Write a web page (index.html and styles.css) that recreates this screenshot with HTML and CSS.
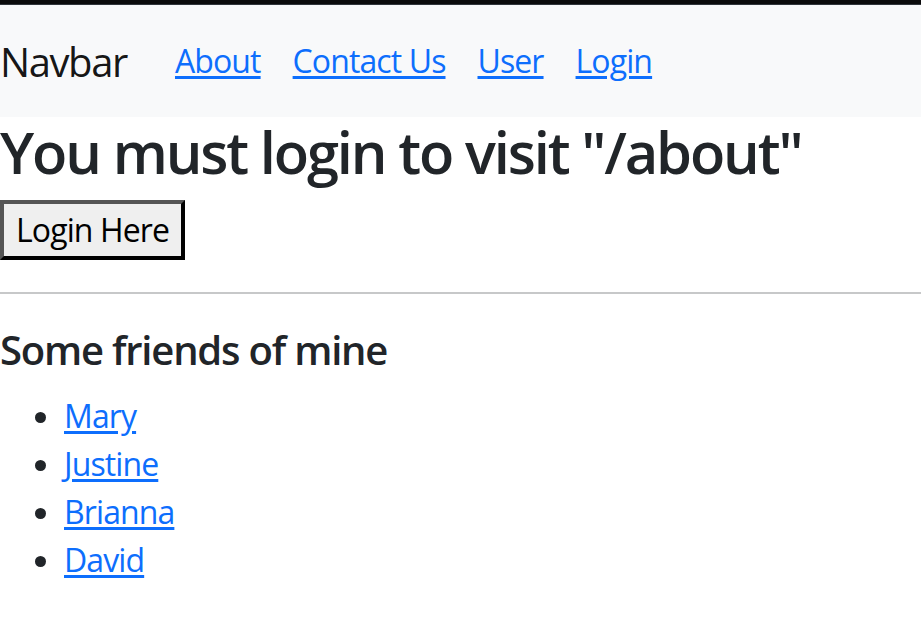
FILE: index.html
```html
<!DOCTYPE html>
<html lang="en">
<head>
<meta charset="utf-8">
<title>Navbar</title>
<link rel="stylesheet" href="styles.css">
</head>
<body>
<div class="topstrip"></div>
<nav class="navbar">
  <a class="brand" href="#">Navbar</a>
  <div class="navlinks">
    <a class="navlink" href="#">About</a>
    <a class="navlink" href="#">Contact Us</a>
    <a class="navlink" href="#">User</a>
    <a class="navlink" href="#">Login</a>
  </div>
</nav>
<main class="content">
  <h1 class="title">You must login to visit "/about"</h1>
  <button class="login-btn" type="button">Login Here</button>
  <hr class="divider">
  <h5 class="subtitle">Some friends of mine</h5>
  <ul class="friends">
    <li><a href="#">Mary</a></li>
    <li><a href="#">Justine</a></li>
    <li><a href="#">Brianna</a></li>
    <li><a href="#">David</a></li>
  </ul>
</main>
</body>
</html>
```
FILE: styles.css
```css
html, body {
  margin: 0;
  padding: 0;
}
body {
  font-family: "Open Sans", "Noto Sans", sans-serif;
  font-size: 32px;
  line-height: 1.5;
  letter-spacing: -0.028em;
  color: #212529;
  background: #fff;
}
a {
  color: #0d6efd;
  text-decoration: underline;
  text-underline-offset: 3px;
}
.topstrip {
  height: 4px;
  background: #0b0b0c;
  border-bottom: 1px solid #30353b;
}
.navbar {
  display: flex;
  align-items: center;
  background: #f8f9fa;
  padding: 16px 0;
}
.brand {
  font-size: 40px;
  line-height: 1.5;
  padding: 11px 0 9px;
  margin-right: 32px;
  letter-spacing: -0.035em;
  color: rgba(0, 0, 0, 0.92);
  text-decoration: none;
}
.navlinks {
  display: flex;
}
.navlink {
  padding: 0 16px;
}
.title {
  font-size: 57.8px;
  font-weight: 600;
  letter-spacing: -0.037em;
  line-height: 1.2;
  margin: 0 0 14px;
}
.login-btn {
  font-family: inherit;
  font-size: 32px;
  line-height: 1.5;
  letter-spacing: inherit;
  color: #000;
  background: #efefef;
  padding: 2px 12px;
  border: 4px solid;
  border-color: #555 #000 #000 #555;
  margin: 0;
}
.divider {
  margin: 32px 0;
  border: 0;
  border-top: 2px solid #212529;
  opacity: 0.25;
}
.subtitle {
  font-size: 40px;
  font-weight: 600;
  letter-spacing: -0.03em;
  line-height: 1.2;
  margin: 0 0 16px;
}
.friends {
  margin: 0 0 32px;
  padding-left: 64px;
}
.friends li {
  padding-top: 2px;
  margin-bottom: -2px;
}
```
